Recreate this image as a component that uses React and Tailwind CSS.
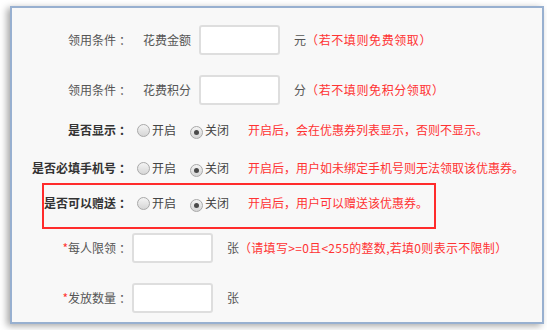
import React from 'react'

const font = { fontFamily: '"Noto Sans CJK SC", "Microsoft YaHei", sans-serif' }
const inputCls = "w-[81px] h-[30px] rounded-[3px] border-2 border-[#dedede] bg-white"
const red = "text-[#ff3333]"

function Radio({ checked }){
  return (
    <span className="relative inline-flex w-[13px] h-[13px] rounded-full border border-[#a9a9a9] bg-gradient-to-b from-[#f4f4f4] to-[#d6d6d6] items-center justify-center">
      {checked && <span className="w-[5px] h-[5px] rounded-full bg-[#4a4a4a]" />}
    </span>
  )
}

function Radios(){
  return (
    <div className="flex items-center">
      <Radio />
      <span className="ml-[2px] text-[#444]">开启</span>
      <span className="ml-[14px]"><Radio checked /></span>
      <span className="ml-[2px] text-[#444]">关闭</span>
    </div>
  )
}

function Label({ children, bold, w = 'w-[116px]' }){
  return (
    <div className={`${w} shrink-0 text-right whitespace-nowrap ${bold ? 'font-bold text-[#333]' : 'text-[#555]'}`}>
      {children}<span className="inline-block w-[12px] pl-[3px]">：</span>
    </div>
  )
}

export default function App(){
  return (
    <div className="w-[547px] h-[330px] bg-white pt-[6px] pl-[10px] text-[12px] leading-[16px]" style={font}>
      <div className="w-[534px] h-[318px] border-2 border-[#98b0d0] bg-[#f8f8f8] shadow-[-3px_2px_7px_rgba(0,0,0,0.35)] pt-[17px]">
        {/* 领用条件 - 金额 */}
        <div className="flex items-center h-[30px]">
          <Label>领用条件</Label>
          <span className="ml-[15px] text-[#555]">花费金额</span>
          <div className={`ml-[8px] ${inputCls}`} />
          <span className="ml-[14px] text-[#555]">元</span>
          <span className={`${red} tracking-[0.6px]`}>（若不填则免费领取）</span>
        </div>

        {/* 领用条件 - 积分 */}
        <div className="flex items-center h-[30px] mt-[20px]">
          <Label>领用条件</Label>
          <span className="ml-[15px] text-[#555]">花费积分</span>
          <div className={`ml-[8px] ${inputCls}`} />
          <span className="ml-[14px] text-[#555]">分</span>
          <span className={`${red} tracking-[0.6px]`}>（若不填则免积分领取）</span>
        </div>

        <div className="flex items-center h-[24px] mt-[13px]">
          <Label bold>是否显示</Label>
          <div className="ml-[9px]"><Radios /></div>
          <span className={`ml-[19px] ${red}`}>开启后，会在优惠券列表显示，否则不显示。</span>
        </div>

        <div className="flex items-center h-[24px] mt-[14px]">
          <Label bold>是否必填手机号</Label>
          <div className="ml-[9px]"><Radios /></div>
          <span className={`ml-[19px] ${red}`}>开启后，用户如未绑定手机号则无法领取该优惠券。</span>
        </div>

        <div className="ml-[30px] mt-[3px] w-[394px] h-[46px] border-2 border-[#ff2b2b] pt-[6px]">
          <div className="flex items-center h-[24px]">
            <Label bold w="w-[84px]">是否可以赠送</Label>
            <div className="ml-[9px]"><Radios /></div>
            <span className={`ml-[19px] ${red}`}>开启后，用户可以赠送该优惠券。</span>
          </div>
        </div>

        <div className="flex items-center h-[30px] mt-[4px]">
          <Label><span className={red}>*</span>每人限领</Label>
          <div className={`ml-[4px] ${inputCls}`} />
          <span className="ml-[14px] text-[#555]">张</span>
          <span className={`${red} tracking-[0.3px]`}>（请填写&gt;=0且&lt;255的整数,若填0则表示不限制）</span>
        </div>

        <div className="flex items-center h-[30px] mt-[20px]">
          <Label><span className={red}>*</span>发放数量</Label>
          <div className={`ml-[4px] ${inputCls}`} />
          <span className="ml-[14px] text-[#555]">张</span>
        </div>
      </div>
    </div>
  )
}
